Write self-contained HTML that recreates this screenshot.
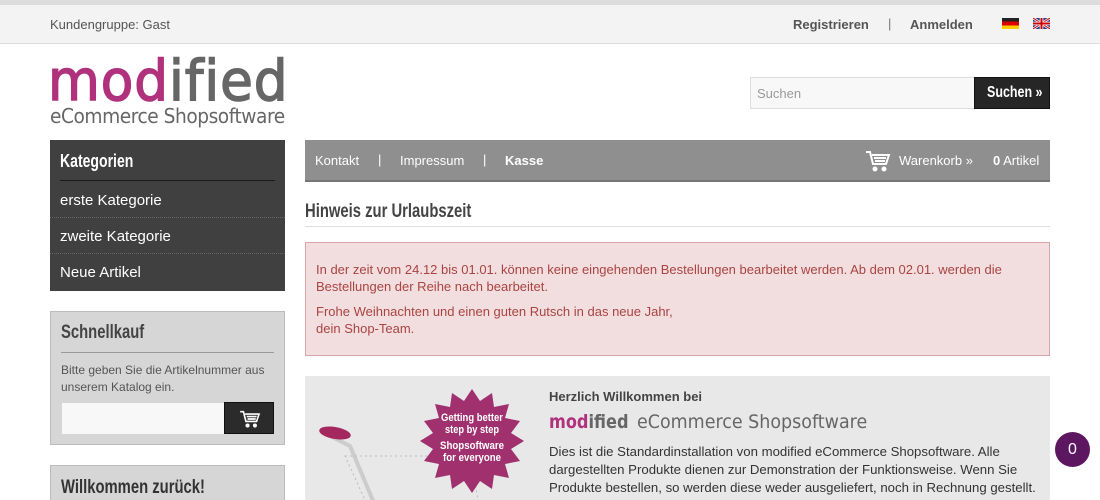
<!DOCTYPE html>
<html><head><meta charset="utf-8"><style>
*{box-sizing:border-box;margin:0;padding:0}
html,body{width:1100px;height:500px;overflow:hidden}
body{background:#fff;font-family:"Liberation Sans",sans-serif;font-size:13px;color:#444;position:relative}
.abs{position:absolute}
.cond{font-family:"Liberation Sans",sans-serif;font-weight:bold;transform:scaleX(0.78);transform-origin:left top;white-space:nowrap}
</style></head><body>
<div class="abs" style="left:0;top:0;width:1100px;height:5px;background:#dcdcdc"></div>
<div class="abs" style="left:0;top:5px;width:1100px;height:39px;background:#f3f3f3;border-bottom:1px solid #ddd"></div>
<div class="abs" style="left:50px;top:17px;color:#555">Kundengruppe: Gast</div>
<div class="abs" style="left:793px;top:17px;font-weight:bold;color:#555">Registrieren</div>
<div class="abs" style="left:888px;top:16px;color:#777">|</div>
<div class="abs" style="left:910px;top:17px;font-weight:bold;color:#555">Anmelden</div>
<div class="abs" style="left:1002px;top:18px;width:17px;height:11px;background:linear-gradient(#222 33%,#d00 33%,#d00 66%,#fc0 66%)"></div>
<svg class="abs" style="left:1033px;top:18px" width="17" height="11" viewBox="0 0 17 11"><rect width="17" height="11" fill="#2a3e8c"/><path d="M0 0L17 11M17 0L0 11" stroke="#fff" stroke-width="2.5"/><path d="M0 0L17 11M17 0L0 11" stroke="#c00" stroke-width="1"/><path d="M8.5 0V11M0 5.5H17" stroke="#fff" stroke-width="3.5"/><path d="M8.5 0V11M0 5.5H17" stroke="#c00" stroke-width="2"/></svg>
<div class="abs" style="left:48px;top:52px;font-size:56px;letter-spacing:1px;line-height:60px;font-family:'DejaVu Sans',sans-serif;transform:scaleX(0.95);transform-origin:left top;white-space:nowrap;-webkit-text-stroke:1.5px currentColor"><span style="color:#b0317c">mod</span><span style="color:#666">ified</span></div>
<div class="abs" style="left:50px;top:104px;font-size:20px;color:#666;font-family:'DejaVu Sans',sans-serif;letter-spacing:-0.5px;transform:scaleX(0.93);transform-origin:left top;white-space:nowrap">eCommerce Shopsoftware</div>
<div class="abs" style="left:750px;top:77px;width:225px;height:32px;background:#f8f8f8;border:1px solid #ddd;color:#999;padding:8px 6px">Suchen</div>
<div class="abs" style="left:974px;top:77px;width:76px;height:32px;background:#262626;border:1px solid #111"><span class="cond" style="position:absolute;left:12px;top:6px;color:#fff;font-size:16px">Suchen »</span></div>
<div class="abs" style="left:305px;top:140px;width:745px;height:42px;background:#8f8f8f;border-bottom:2px solid #777;color:#fff">
<span class="abs" style="left:10px;top:13px">Kontakt</span><span class="abs" style="left:73px;top:12px">|</span>
<span class="abs" style="left:95px;top:13px">Impressum</span><span class="abs" style="left:178px;top:12px">|</span>
<span class="abs" style="left:200px;top:13px;font-weight:bold">Kasse</span>
<svg class="abs" style="left:560px;top:10px" width="26" height="22" viewBox="0 0 26 22" fill="none" stroke="#fff" stroke-width="2"><path d="M1 2h4l3 12h13l3-9H7"/><path d="M9 8h12M10 11h10"/><circle cx="10" cy="19" r="1.5" fill="#fff"/><circle cx="19" cy="19" r="1.5" fill="#fff"/></svg>
<span class="abs" style="left:594px;top:13px">Warenkorb »</span>
<span class="abs" style="left:688px;top:13px"><b>0</b> Artikel</span></div>
<div class="abs" style="left:50px;top:140px;width:235px;height:151px;background:#404040;color:#fff;font-size:15px">
<div class="cond" style="position:absolute;left:10px;top:11px;font-size:18px">Kategorien</div>
<div style="position:absolute;left:10px;right:10px;top:40px;border-top:1px solid #1a1a1a"></div>
<div style="position:absolute;left:10px;top:52px">erste Kategorie</div>
<div style="position:absolute;left:0;right:0;top:77px;border-top:1px dotted #666"></div>
<div style="position:absolute;left:10px;top:88px">zweite Kategorie</div>
<div style="position:absolute;left:0;right:0;top:113px;border-top:1px dotted #666"></div>
<div style="position:absolute;left:10px;top:124px">Neue Artikel</div>
</div>
<div class="abs" style="left:50px;top:311px;width:235px;height:134px;background:#d6d6d6;border:1px solid #bbb">
<div class="cond" style="position:absolute;left:10px;top:10px;font-size:19px;color:#444">Schnellkauf</div>
<div style="position:absolute;left:10px;right:10px;top:40px;border-top:1px solid #999"></div>
<div style="position:absolute;left:10px;top:50px;font-size:12px;line-height:17px;color:#555">Bitte geben Sie die Artikelnummer aus unserem Katalog ein.</div>
<div style="position:absolute;left:11px;top:91px;width:163px;height:31px;background:#f8f8f8"></div>
<div style="position:absolute;left:173px;top:90px;width:50px;height:32px;background:#2b2b2b;border:1px solid #111"><svg style="position:absolute;left:14px;top:7px" width="22" height="18" viewBox="0 0 26 22" fill="none" stroke="#fff" stroke-width="2"><path d="M1 2h4l3 12h13l3-9H7"/><path d="M9 8h12M10 11h10"/><circle cx="10" cy="19" r="1.5" fill="#fff"/><circle cx="19" cy="19" r="1.5" fill="#fff"/></svg></div>
</div>
<div class="abs" style="left:50px;top:465px;width:235px;height:35px;background:#d6d6d6;border:1px solid #bbb;border-bottom:none">
<div class="cond" style="position:absolute;left:10px;top:11px;font-size:19px;color:#333">Willkommen zurück!</div></div>
<div class="abs cond" style="left:305px;top:201px;font-size:19px;color:#444">Hinweis zur Urlaubszeit</div>
<div class="abs" style="left:305px;top:226px;width:745px;border-top:1px solid #ddd"></div>
<div class="abs" style="left:305px;top:242px;width:745px;height:114px;background:#f2dede;border:1px solid #d8a5a8;color:#a94442;padding:18px 10px 0;line-height:17px">
In der zeit vom 24.12 bis 01.01. können keine eingehenden Bestellungen bearbeitet werden. Ab dem 02.01. werden die Bestellungen der Reihe nach bearbeitet.<div style="margin-top:8px">Frohe Weihnachten und einen guten Rutsch in das neue Jahr,<br>dein Shop-Team.</div></div>
<div class="abs" style="left:305px;top:376px;width:745px;height:124px;background:#e8e8e8;overflow:hidden">
<svg style="position:absolute;left:5px;top:45px" width="200" height="90"><path d="M20 15 L40 25 L80 120" stroke="#ccc" stroke-width="4" fill="none"/><ellipse cx="25" cy="12" rx="16" ry="6" fill="#a5275f" transform="rotate(10 25 12)"/><path d="M35 35 L160 35 L170 90 L60 90Z" fill="none" stroke="#bbb" stroke-dasharray="2 3"/></svg>
<svg style="position:absolute;left:112px;top:10px" width="110" height="110" viewBox="-55 -55 110 110"><polygon fill="#a0306e" points="0,-52 8,-40 20,-48 22,-34 37,-37 33,-23 48,-20 39,-8 52,0 39,8 48,20 33,23 37,37 22,34 20,48 8,40 0,52 -8,40 -20,48 -22,34 -37,37 -33,23 -48,20 -39,8 -52,0 -39,-8 -48,-20 -33,-23 -37,-37 -22,-34 -20,-48 -8,-40"/><g fill="#fff" font-size="11" text-anchor="middle" font-family="Liberation Sans,sans-serif" font-weight="bold"><text y="-20" textLength="62" lengthAdjust="spacingAndGlyphs">Getting better</text><text y="-8" textLength="54" lengthAdjust="spacingAndGlyphs">step by step</text><text y="8" textLength="64" lengthAdjust="spacingAndGlyphs">Shopsoftware</text><text y="20" textLength="58" lengthAdjust="spacingAndGlyphs">for everyone</text></g></svg>
<div style="position:absolute;left:244px;top:13px;font-weight:bold;color:#444">Herzlich Willkommen bei</div>
<div style="position:absolute;left:244px;top:35px;font-size:19px;color:#666;font-family:'DejaVu Sans',sans-serif;white-space:nowrap"><span style="font-weight:bold;display:inline-block;transform:scaleX(0.85);transform-origin:left;margin-right:-12px"><span style="color:#b0317c">mod</span>ified</span> <span style="display:inline-block;transform:scaleX(0.92);transform-origin:left">eCommerce Shopsoftware</span></div>
<div style="position:absolute;left:244px;top:67px;width:500px;font-size:13.2px;line-height:18px;color:#333">Dies ist die Standardinstallation von modified eCommerce Shopsoftware. Alle dargestellten Produkte dienen zur Demonstration der Funktionsweise. Wenn Sie Produkte bestellen, so werden diese weder ausgeliefert, noch in Rechnung gestellt.</div>
</div>
<div class="abs" style="left:1055px;top:432px;width:35px;height:35px;border-radius:50%;background:#5c1760;color:#fff;font-size:16px;text-align:center;line-height:35px">0</div>
</body></html>
